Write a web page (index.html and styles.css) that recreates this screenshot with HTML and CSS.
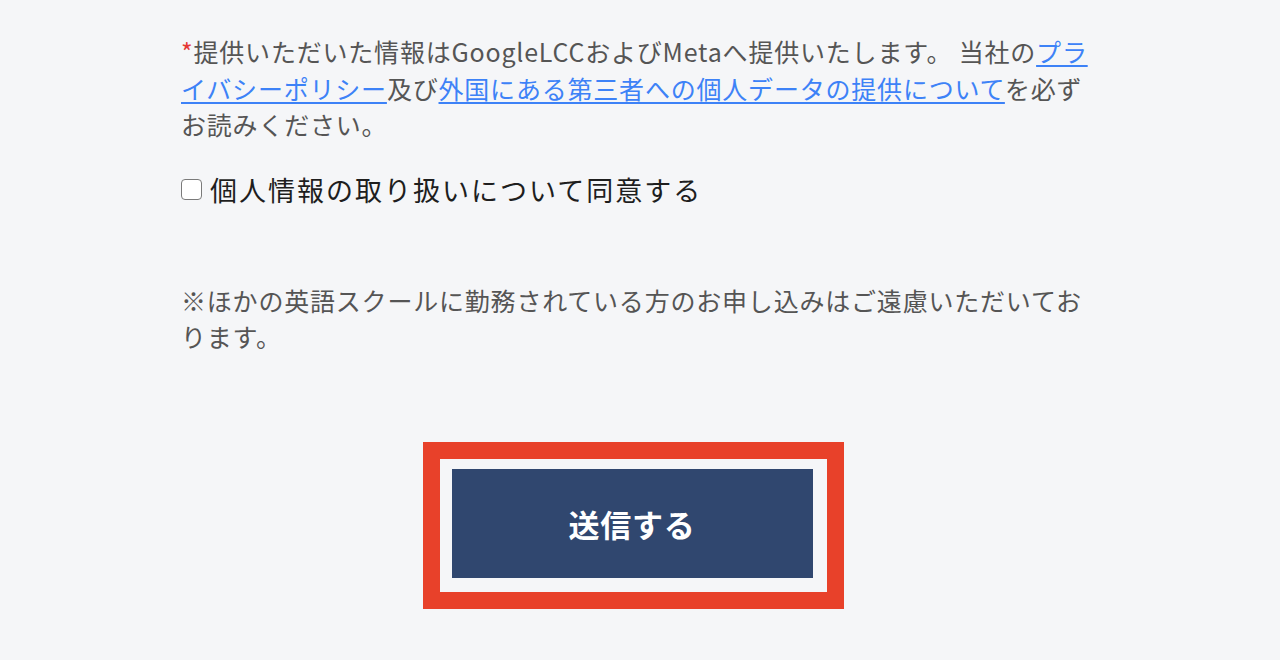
FILE: index.html
```html
<!DOCTYPE html>
<html lang="ja">
<head>
    <meta charset="UTF-8">
    <meta name="viewport" content="width=device-width, initial-scale=1.0">
    <title>お問い合わせ</title>
    <link rel="stylesheet" href="styles.css">
</head>
<body>
    <form class="entry-form">
        <p class="notice">
            <span class="required">*</span>提供いただいた情報はGoogleLCCおよびMetaへ提供いたします。 当社の<a href="#">プライバシーポリシー</a>及び<a href="#">外国にある第三者への個人データの提供について</a>を必ずお読みください。
        </p>

        <label class="agree">
            <input type="checkbox" name="agree">
            <span>個人情報の取り扱いについて同意する</span>
        </label>

        <p class="notice note">※ほかの英語スクールに勤務されている方のお申し込みはご遠慮いただいております。</p>

        <div class="submit-area">
            <div class="highlight">
                <button type="submit" class="submit-btn">送信する</button>
            </div>
        </div>
    </form>
</body>
</html>
```

FILE: styles.css
```css
body {
    margin: 0;
    background-color: #f5f6f8; /* 薄いグレー背景 */
    font-family: "Noto Sans CJK JP", "Noto Sans", sans-serif;
    color: #555555;
}
.entry-form {
    width: 920px;
    margin-left: 181px;
    padding-top: 33px;
}
.notice {
    margin: 0;
    font-size: 25px;
    line-height: 36.5px;
    letter-spacing: 0.8px;
}
.required {
    color: #e53935;
}
.notice a {
    color: #3d82f7; /* リンク青 */
    text-decoration: underline;
    text-underline-offset: 3px;
}
.agree {
    display: flex;
    align-items: center;
    gap: 8px;
    margin-top: 29px;
    font-size: 27px;
    line-height: 36px;
    letter-spacing: 2px;
    color: #1e1e1e;
}
.agree input {
    appearance: none;
    width: 21px;
    height: 21px;
    margin: 0;
    border: 1.5px solid #7a7a7a;
    border-radius: 4px;
    background-color: #ffffff;
    box-sizing: border-box;
}
.note {
    margin-top: 74px;
}
.submit-area {
    display: flex;
    justify-content: center;
    width: 904px;
    margin-top: 87px;
}
.highlight {
    border: 17px solid #e8412a; /* 強調枠 */
    padding: 10px 14px 14px 12px;
}
.submit-btn {
    display: block;
    width: 361px;
    height: 109px;
    border: none;
    background-color: #30476f; /* 紺色ボタン */
    color: #ffffff;
    font-family: "Noto Sans CJK JP", sans-serif;
    font-size: 31px;
    font-weight: bold;
    letter-spacing: 0.8px;
    cursor: pointer;
}
```
